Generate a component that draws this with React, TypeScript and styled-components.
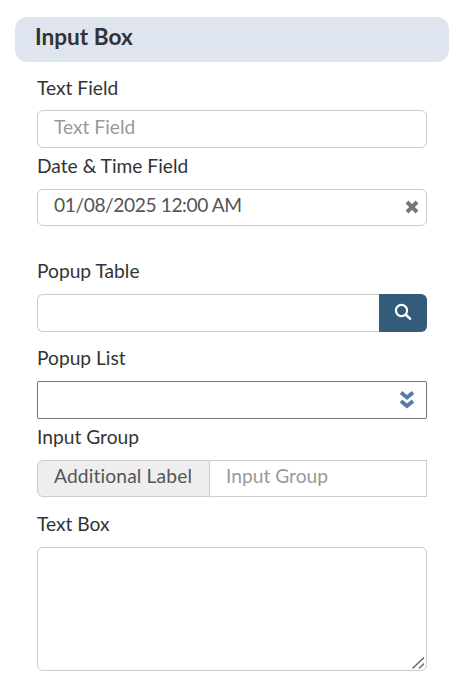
import React from 'react';
import styled, { createGlobalStyle } from 'styled-components';

const GlobalStyle = createGlobalStyle`
  html, body {
    margin: 0;
    padding: 0;
    background: #fff;
  }
  body {
    font-family: 'Lato', 'Liberation Sans', sans-serif;
    color: #333;
  }
`;

const Page = styled.div`
  width: 464px;
  height: 687px;
  overflow: hidden;
  padding: 17px 15px 0;
  box-sizing: border-box;
`;

const SectionHeader = styled.h2`
  width: 434px;
  height: 45px;
  margin: 0;
  padding: 0 0 6px 20px;
  box-sizing: border-box;
  display: flex;
  align-items: center;
  background: #dfe5ef;
  border-radius: 12px;
  font-size: 22.6px;
  font-weight: 700;
  color: #333;
`;

const Form = styled.div`
  width: 390px;
  margin-left: 22px;
  display: flex;
  flex-direction: column;
`;

const Field = styled.div<{ $top: number }>`
  display: flex;
  flex-direction: column;
  padding-top: ${(props) => props.$top}px;
`;

const Label = styled.label`
  font-size: 19.2px;
  line-height: 24px;
  height: 26px;
  margin-bottom: 9px;
  color: #333;
`;

const FirstLabel = styled(Label)`
  line-height: 26px;
`;

const TextInput = styled.input`
  width: 100%;
  height: 38px;
  box-sizing: border-box;
  border: 1px solid #ccc;
  border-radius: 6px;
  padding: 0 16px 5px;
  outline: none;
  font-family: inherit;
  font-size: 19.2px;
  color: #555;
  background: #fff;
  &::placeholder {
    color: #999;
    opacity: 1;
  }
`;

const DateWrap = styled.div`
  position: relative;
  height: 37px;
`;

const DateInput = styled(TextInput)`
  height: 37px;
  padding: 0 36px 6px 16px;
  letter-spacing: -0.42px;
`;

const ClearIcon = styled.svg`
  position: absolute;
  right: 8px;
  top: 11px;
  width: 14px;
  height: 14px;
`;

const SearchRow = styled.div`
  display: flex;
  height: 38px;
`;

const SearchInput = styled(TextInput)`
  flex: 1;
  min-width: 0;
  border-right: none;
  border-radius: 6px 0 0 6px;
`;

const SearchButton = styled.button`
  width: 48px;
  height: 38px;
  padding: 0 0 2px;
  border: none;
  border-radius: 0 6px 6px 0;
  background: #335c78;
  display: flex;
  align-items: center;
  justify-content: center;
`;

const SelectBox = styled.div`
  height: 38px;
  box-sizing: border-box;
  border: 1px solid #767676;
  border-radius: 2px;
  background: #fff;
  display: flex;
  align-items: center;
  justify-content: flex-end;
  padding-right: 12px;
`;

const Group = styled.div`
  display: flex;
  height: 37px;
`;

const Addon = styled.span`
  width: 173px;
  box-sizing: border-box;
  display: flex;
  align-items: center;
  padding: 0 0 7px 16px;
  background: #eee;
  border: 1px solid #ccc;
  border-radius: 6px 0 0 6px;
  font-size: 19.2px;
  letter-spacing: 0.15px;
  color: #555;
`;

const GroupInput = styled(TextInput)`
  flex: 1;
  min-width: 0;
  height: 37px;
  padding-bottom: 7px;
  border-left: none;
  border-radius: 0;
`;

const AreaWrap = styled.div`
  position: relative;
  height: 124px;
`;

const TextArea = styled.textarea`
  display: block;
  width: 100%;
  height: 124px;
  box-sizing: border-box;
  border: 1px solid #ccc;
  border-radius: 6px;
  outline: none;
  background: #fff;
  resize: none;
`;

const ResizeGrip = styled.svg`
  position: absolute;
  right: 1px;
  bottom: 1px;
  width: 16px;
  height: 16px;
`;

export default function App() {
  return (
    <Page>
      <GlobalStyle />
      <SectionHeader>Input Box</SectionHeader>
      <Form>
        <Field $top={13}>
          <FirstLabel>Text Field</FirstLabel>
          <TextInput placeholder="Text Field" />
        </Field>
        <Field $top={6}>
          <Label>Date &amp; Time Field</Label>
          <DateWrap>
            <DateInput defaultValue="01/08/2025 12:00 AM" />
            <ClearIcon viewBox="0 0 14 14">
              <path d="M0.6 3.4 L3.4 0.6 L7 4.2 L10.6 0.6 L13.4 3.4 L9.8 7 L13.4 10.6 L10.6 13.4 L7 9.8 L3.4 13.4 L0.6 10.6 L4.2 7 Z" fill="#777" />
            </ClearIcon>
          </DateWrap>
        </Field>
        <Field $top={33}>
          <Label>Popup Table</Label>
          <SearchRow>
            <SearchInput />
            <SearchButton aria-label="Search">
              <svg width="18" height="18" viewBox="0 0 18 18" fill="none" stroke="#fff">
                <circle cx="7.5" cy="7.5" r="5.6" strokeWidth="2.2" />
                <path d="M11.8 11.8 L16 15.6" strokeWidth="2.6" strokeLinecap="round" />
              </svg>
            </SearchButton>
          </SearchRow>
        </Field>
        <Field $top={14}>
          <Label>Popup List</Label>
          <SelectBox>
            <svg width="14" height="18" viewBox="0 0 14 18" fill="none" stroke="#5b7aa6" strokeWidth="3.8">
              <path d="M1 1.5 L7 6.5 L13 1.5" />
              <path d="M1 10 L7 15 L13 10" />
            </svg>
          </SelectBox>
        </Field>
        <Field $top={6}>
          <Label>Input Group</Label>
          <Group>
            <Addon>Additional Label</Addon>
            <GroupInput placeholder="Input Group" />
          </Group>
        </Field>
        <Field $top={15}>
          <Label>Text Box</Label>
          <AreaWrap>
            <TextArea />
            <ResizeGrip viewBox="0 0 16 16" fill="none" stroke="#666" strokeWidth="1.5">
              <path d="M2.5 14.5 L14 3.5" />
              <path d="M9 14.5 L14 9.5" />
            </ResizeGrip>
          </AreaWrap>
        </Field>
      </Form>
    </Page>
  );
}
